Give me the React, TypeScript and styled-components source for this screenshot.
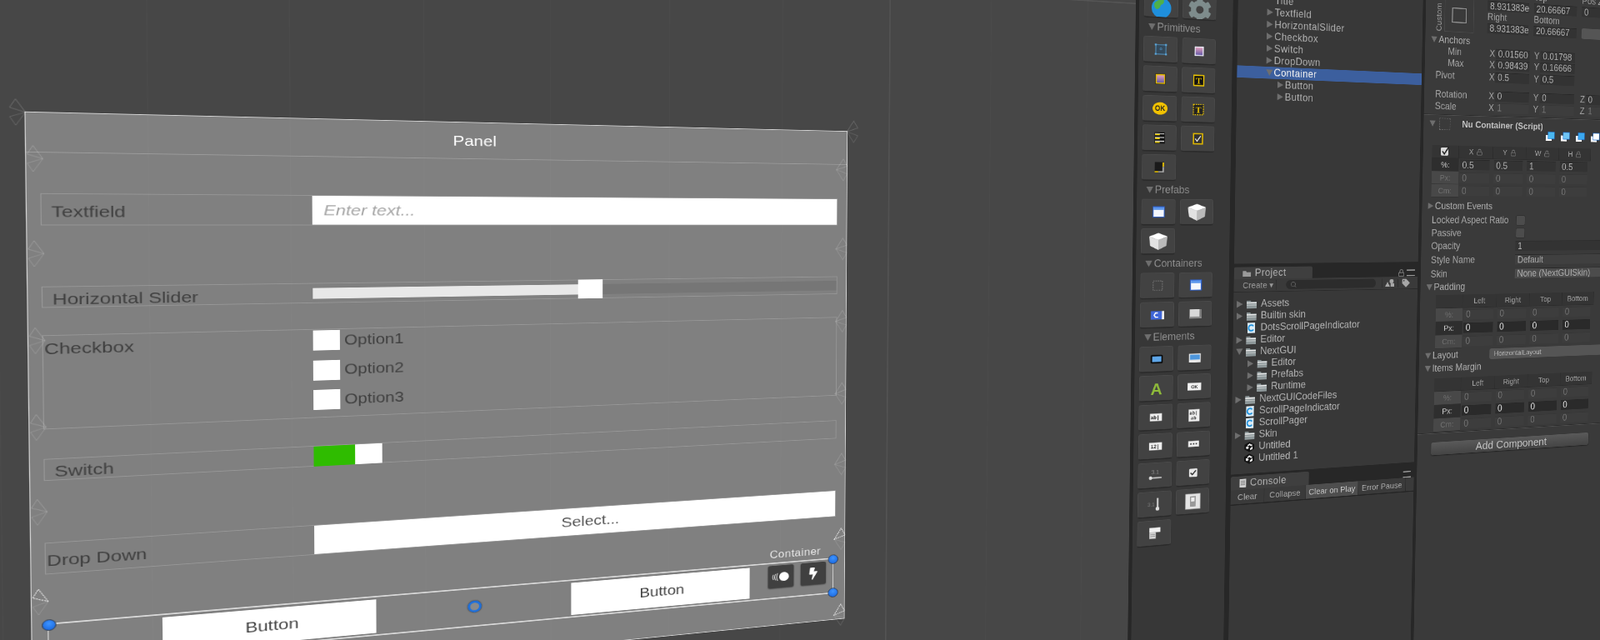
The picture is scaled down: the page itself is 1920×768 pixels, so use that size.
import React from 'react'
import styled, { createGlobalStyle, css } from 'styled-components'
import { FaCog, FaTag, FaBolt } from 'react-icons/fa'
import { Lock, Search } from 'lucide-react'

// The whole editor is tilted in the picture. It is laid out flat and mapped on
// screen with one homography, measured from the corners of the 1000x770 panel.
const PANEL_QUAD = [
  [30.6, 134.7],
  [1016.3, 158],
  [1012.7, 741.7],
  [39.5, 838]
]
const PANEL_W = 1000
const PANEL_H = 770
const ORIGIN_X = -60
const ORIGIN_Y = -320

function pageMatrix() {
  const [[x0, y0], [x1, y1], [x2, y2], [x3, y3]] = PANEL_QUAD
  const sx = x0 - x1 + x2 - x3
  const sy = y0 - y1 + y2 - y3
  const dx1 = x1 - x2
  const dx2 = x3 - x2
  const dy1 = y1 - y2
  const dy2 = y3 - y2
  const den = dx1 * dy2 - dx2 * dy1
  const g = (sx * dy2 - dx2 * sy) / den
  const h = (dx1 * sy - sx * dy1) / den
  const a = (x1 - x0 + g * x1) / PANEL_W
  const b = (x3 - x0 + h * x3) / PANEL_H
  const d = (y1 - y0 + g * y1) / PANEL_W
  const e = (y3 - y0 + h * y3) / PANEL_H
  const gg = g / PANEL_W
  const hh = h / PANEL_H
  const c = x0 + a * ORIGIN_X + b * ORIGIN_Y
  const f = y0 + d * ORIGIN_X + e * ORIGIN_Y
  const i = 1 + gg * ORIGIN_X + hh * ORIGIN_Y
  return `matrix3d(${[a, d, 0, gg, b, e, 0, hh, 0, 0, 1, 0, c, f, 0, i].join(',')})`
}

const GlobalStyle = createGlobalStyle`
  html, body {
    margin: 0;
    height: 100%;
    overflow: hidden;
    background: #474747;
  }
`

const Stage = styled.div`
  display: flex;
  width: 2600px;
  height: 1320px;
  background: #272727;
  font-family: 'Liberation Sans', Arial, sans-serif;
  font-size: 17.5px;
  color: #b0b0b0;
  filter: blur(0.45px);
  transform-origin: 0 0;
  transform: ${pageMatrix()};
`

/* ---------- scene view ---------- */

const Scene = styled.div`
  flex: none;
  width: 1515px;
  padding: 320px 0 0 60px;
  box-sizing: border-box;
  background-color: #474747;
  background-image:
    linear-gradient(rgba(255, 255, 255, 0.08), rgba(255, 255, 255, 0.08)),
    linear-gradient(rgba(255, 255, 255, 0.05), rgba(255, 255, 255, 0.05)),
    linear-gradient(90deg, rgba(255, 255, 255, 0.02) 1px, transparent 1px);
  background-size: 100% 2px, 2px 100%, 156px 100%;
  background-position: 0 92px, 1122px 0, 30px 0;
  background-repeat: no-repeat, no-repeat, repeat;
`

const Panel = styled.div`
  position: relative;
  width: ${PANEL_W}px;
  height: ${PANEL_H}px;
  box-sizing: border-box;
  background: rgba(255, 255, 255, 0.31);
  outline: 1.5px solid #d4d4d4;
  color: #3f3f3f;
  font-size: 21px;
`

const PanelTitle = styled.div`
  height: 52px;
  padding-top: 3px;
  box-sizing: border-box;
  text-align: center;
  line-height: 46px;
  color: #fff;
  border-bottom: 1px solid rgba(255, 255, 255, 0.22);
`

const FormRow = styled.div<{ $mt: number; $h: number; $top?: boolean }>`
  display: flex;
  align-items: ${p => (p.$top ? 'flex-start' : 'stretch')};
  box-sizing: border-box;
  height: ${p => p.$h}px;
  margin: ${p => p.$mt}px 13.5px 0 14px;
  border: 1px solid rgba(255, 255, 255, 0.18);
`

const RowLabel = styled.div<{ $flush?: boolean; $top?: boolean }>`
  flex: none;
  width: 292px;
  box-sizing: border-box;
  padding: ${p => (p.$top ? 0 : 4)}px 0 0 ${p => (p.$flush ? 1 : 10)}px;
  line-height: ${p => (p.$top ? '33px' : '1')};
  display: flex;
  align-items: ${p => (p.$top ? 'flex-start' : 'center')};
`

const TextInput = styled.div`
  flex: 1;
  display: flex;
  align-items: center;
  padding-left: 13px;
  background: #fff;
  color: #a6a6a6;
  font-style: italic;
`

const SliderTrack = styled.div`
  flex: 1;
  position: relative;
  display: flex;
  align-items: center;
`

const SliderRail = styled.div`
  flex: 1;
  height: 15px;
  background: #767676;
`

const SliderFill = styled.div`
  height: 100%;
  background: #e8e8e8;
`

const SliderThumb = styled.div`
  position: absolute;
  top: -1px;
  width: 32px;
  height: 28px;
  background: #fff;
`

const OptionList = styled.div`
  display: flex;
  flex-direction: column;
  gap: 13.5px;
  padding-top: 1px;
`

const Option = styled.div`
  display: flex;
  align-items: center;
  gap: 5px;
  height: 28px;
  font-size: 20px;
`

const OptionBox = styled.div`
  width: 31px;
  height: 28px;
  background: #fff;
`

const Switch = styled.div`
  display: flex;
  height: 28px;
`

const SwitchPart = styled.div<{ $on?: boolean }>`
  width: ${p => (p.$on ? 48 : 32)}px;
  background: ${p => (p.$on ? '#2fbc00' : '#fff')};
`

const SelectBox = styled.div`
  flex: 1;
  display: flex;
  align-items: center;
  justify-content: center;
  background: #fff;
  color: #555;
`

const ContainerBar = styled.div`
  position: relative;
  display: flex;
  justify-content: space-around;
  align-items: center;
  box-sizing: border-box;
  height: 57px;
  margin: 65px 15.6px 0;
  border: solid #d8d8d8;
  border-width: 2px 1px;
`

const WhiteButton = styled.div`
  display: flex;
  align-items: center;
  justify-content: center;
  width: 25%;
  height: 48px;
  background: #fff;
  color: #444;
`

const ContainerTag = styled.div`
  position: absolute;
  right: 18px;
  bottom: 100%;
  margin-bottom: 5px;
  font-size: 16px;
  letter-spacing: 0.5px;
  color: #e4e4e4;
`

const GizmoButtons = styled.div`
  position: absolute;
  right: 10px;
  top: 3px;
  display: flex;
  gap: 10px;
`

const GizmoButton = styled.div`
  display: flex;
  align-items: center;
  justify-content: center;
  width: 37px;
  height: 35px;
  border-radius: 3px;
  background: #404040;
  color: #fff;
  box-shadow: 0 1px 2px rgba(0, 0, 0, 0.5);
`

const Handle = styled.div<{ $x: string; $y: string }>`
  position: absolute;
  left: ${p => p.$x};
  top: ${p => p.$y};
  width: 13px;
  height: 13px;
  margin: -7px 0 0 -7px;
  border-radius: 50%;
  background: radial-gradient(circle at 50% 35%, #3d94ff, #1560d8);
  border: 1px solid #2c3a4f;
`

const PivotRing = styled.div`
  position: absolute;
  left: 50%;
  top: 50%;
  width: 11px;
  height: 11px;
  margin: -10px 0 0 -10px;
  border-radius: 50%;
  border: 3.5px solid #1f70dc;
  background: #8a8a8a;
  box-shadow: 0 0 2px #222;
`

const GizmoLayer = styled.svg`
  position: absolute;
  left: 0;
  top: 0;
  overflow: visible;
  pointer-events: none;
`

const ANCHOR_ROWS = [60, 184, 298, 412, 524, 643, 764]

const AnchorFan = ({ x, y, flip, live }: { x: number; y: number; flip?: boolean; live?: boolean }) => (
  <g transform={`translate(${x} ${y}) scale(${flip ? -1 : 1} 1)`} fill="none" strokeWidth="1">
    <path
      d="M0 0 L-10 -17 L-16 -6 Z"
      stroke={live ? '#fff' : 'rgba(255,255,255,0.18)'}
      strokeDasharray={live ? '2 1' : undefined}
    />
    <path d="M0 0 L-16 6 L-10 17 Z" stroke="rgba(255,255,255,0.14)" />
  </g>
)

/* ---------- toolbox ---------- */

const Toolbox = styled.div`
  flex: none;
  width: 164px;
  margin-left: 6px;
  box-sizing: border-box;
  padding: 70px 0 0 8px;
  background: #373737;
`

const SectionHead = styled.div`
  display: flex;
  align-items: center;
  gap: 3px;
  height: 32px;
  padding-left: 8px;
  color: #8f8f8f;
`

const ToolGrid = styled.div`
  display: grid;
  grid-template-columns: 59px 59px;
  grid-auto-rows: 44px;
  gap: 6px 8px;
`

const ToolButton = styled.div`
  display: flex;
  align-items: center;
  justify-content: center;
  overflow: hidden;
  border-radius: 4px;
  background: #424242;
  border: 1px solid #4a4a4a;
  border-bottom-color: #2b2b2b;
  box-sizing: border-box;
  box-shadow: 0 1px 1px #2a2a2a;
`

const Fold = styled.span<{ $open?: boolean }>`
  flex: none;
  width: 0;
  height: 0;
  ${p =>
    p.$open
      ? css`
          border-left: 6px solid transparent;
          border-right: 6px solid transparent;
          border-top: 11px solid #6e6e6e;
        `
      : css`
          border-top: 6px solid transparent;
          border-bottom: 6px solid transparent;
          border-left: 11px solid #6e6e6e;
        `}
`

const Pic = ({ children, large }: { children: React.ReactNode; large?: boolean }) => (
  <svg width={large ? 40 : 32} height={large ? 32 : 26} viewBox="0 0 40 32">
    {children}
  </svg>
)

const Cube = () => (
  <Pic large>
    <polygon points="20,2 36,8 20,14 4,8" fill="#fff" />
    <polygon points="4,8 20,14 20,31 6,24" fill="#e2e2e2" />
    <polygon points="36,8 20,14 20,31 34,24" fill="#b9b9b9" />
  </Pic>
)

const Win = () => (
  <Pic>
    <rect x="8" y="5" width="24" height="22" fill="#f4f6fb" stroke="#2f62d0" strokeWidth="2" />
    <rect x="9" y="6" width="22" height="6" fill="#5d97ec" />
  </Pic>
)

const Sky = ({ id, stroke, fillBack }: { id: string; stroke: string; fillBack?: string }) => (
  <Pic>
    <defs>
      <linearGradient id={id} x1="0" y1="0" x2="0" y2="1">
        <stop offset="0" stopColor="#e8a3bd" />
        <stop offset="1" stopColor="#5d55a6" />
      </linearGradient>
    </defs>
    <rect x="9" y="5" width="22" height="22" fill={fillBack ?? 'none'} />
    <rect x="11" y="7" width="18" height="18" fill={`url(#${id})`} stroke={stroke} strokeWidth="2.5" />
  </Pic>
)

const TOOLS: Record<string, React.ReactNode> = {
  globe: (
    <svg width="40" height="40" viewBox="0 0 40 40" style={{ marginTop: 12 }}>
      <circle cx="20" cy="20" r="17" fill="#1f8fdc" />
      <path d="M8 12 q8 -8 16 -6 q2 6 -5 9 q-2 8 -8 7 q-5 -4 -3 -10z" fill="#4fb04a" />
    </svg>
  ),
  gear: <FaCog size={42} color="#7e8c8c" style={{ marginTop: 10 }} />,
  rect: (
    <Pic>
      <rect x="9" y="6" width="22" height="20" fill="#34495a" stroke="#5aa8de" strokeWidth="1.5" />
      <rect x="7" y="4" width="4" height="4" fill="#5aa8de" />
      <rect x="29" y="4" width="4" height="4" fill="#5aa8de" />
      <rect x="7" y="24" width="4" height="4" fill="#5aa8de" />
      <rect x="29" y="24" width="4" height="4" fill="#5aa8de" />
      <circle cx="20" cy="15" r="2" fill="none" stroke="#5aa8de" />
    </Pic>
  ),
  imageWhite: <Sky id="skyA" stroke="#e8e8f4" fillBack="#222" />,
  imageYellow: <Sky id="skyB" stroke="#e0b800" fillBack="#111" />,
  textBox: (
    <Pic>
      <rect x="9" y="5" width="22" height="22" fill="#111" stroke="#f0c800" strokeWidth="2.5" />
      <text x="20" y="23" textAnchor="middle" fontFamily="'Liberation Serif', serif" fontWeight="700" fontSize="19" fill="#f0c800">T</text>
    </Pic>
  ),
  ok: (
    <Pic large>
      <ellipse cx="20" cy="16" rx="13" ry="10.5" fill="#f2c200" />
      <text x="20" y="20.5" textAnchor="middle" fontFamily="'Liberation Sans', sans-serif" fontWeight="700" fontSize="12" fill="#222">OK</text>
    </Pic>
  ),
  textDashed: (
    <Pic>
      <rect x="9" y="5" width="22" height="22" fill="#222" stroke="#f0c800" strokeWidth="2" strokeDasharray="3 2" />
      <text x="20" y="23" textAnchor="middle" fontFamily="'Liberation Serif', serif" fontWeight="700" fontSize="19" fill="#f0c800">T</text>
    </Pic>
  ),
  list: (
    <Pic>
      <rect x="9" y="4" width="22" height="24" fill="#111" />
      {[6, 14, 22].map(y => (
        <React.Fragment key={y}>
          <rect x="10" y={y} width="20" height="2" fill="#ddd" />
          <rect x="10" y={y + 2} width="10" height="2.5" fill="#f0d000" />
        </React.Fragment>
      ))}
    </Pic>
  ),
  check: (
    <Pic>
      <rect x="10" y="5" width="20" height="22" fill="#333" stroke="#e0b800" strokeWidth="2.5" />
      <path d="M14 16 l4 5 l8 -11" fill="none" stroke="#fff" strokeWidth="2" />
    </Pic>
  ),
  slider: (
    <Pic>
      <rect x="10" y="5" width="20" height="22" fill="#1a1a1a" />
      <rect x="27" y="6" width="3" height="9" fill="#f0c800" />
      <rect x="27" y="15" width="3" height="12" fill="#aaa" />
      <rect x="10" y="24" width="8" height="3" fill="#f0c800" />
      <rect x="18" y="24" width="10" height="3" fill="#aaa" />
    </Pic>
  ),
  window: <Win />,
  cube: <Cube />,
  dashed: (
    <Pic>
      <rect x="10" y="6" width="20" height="20" fill="none" stroke="#6e6e6e" strokeWidth="2" strokeDasharray="3 2" />
    </Pic>
  ),
  scroll: (
    <Pic>
      <rect x="6" y="8" width="24" height="18" fill="#3f66d8" />
      <rect x="30" y="8" width="5" height="18" fill="#eee" />
      <path d="M21 12 h-5 l-3 5 l3 4 h6" fill="none" stroke="#fff" strokeWidth="2.5" />
    </Pic>
  ),
  panelGray: (
    <Pic>
      <rect x="7" y="6" width="26" height="20" fill="#d8d8d8" />
      <rect x="29" y="6" width="4" height="20" fill="#7a7a7a" />
      <rect x="7" y="22" width="26" height="4" fill="#8a8a8a" />
    </Pic>
  ),
  buttonDark: (
    <Pic>
      <rect x="7" y="7" width="26" height="18" rx="2" fill="#0a0a0a" />
      <rect x="10" y="10" width="20" height="12" fill="#5ea6e8" />
    </Pic>
  ),
  buttonBlue: (
    <Pic>
      <rect x="7" y="7" width="26" height="19" fill="#e8e8e8" />
      <rect x="9" y="9" width="22" height="11" fill="#4d96dc" />
    </Pic>
  ),
  label: (
    <Pic large>
      <text x="20" y="27" textAnchor="middle" fontFamily="'Liberation Sans', sans-serif" fontWeight="700" fontSize="28" fill="#8fbb3a">A</text>
    </Pic>
  ),
  okWhite: (
    <Pic>
      <rect x="5" y="8" width="30" height="16" fill="#f2f2f2" />
      <text x="20" y="20" textAnchor="middle" fontFamily="'Liberation Sans', sans-serif" fontWeight="700" fontSize="10" fill="#333">OK</text>
    </Pic>
  ),
  abField: (
    <Pic>
      <rect x="7" y="8" width="26" height="16" fill="#eee" />
      <text x="18" y="20" textAnchor="middle" fontFamily="'Liberation Mono', monospace" fontWeight="700" fontSize="11" fill="#222">ab|</text>
    </Pic>
  ),
  abArea: (
    <Pic>
      <rect x="8" y="3" width="24" height="26" fill="#eee" />
      <text x="19" y="14" textAnchor="middle" fontFamily="'Liberation Mono', monospace" fontWeight="700" fontSize="10" fill="#222">ab|</text>
      <text x="19" y="25" textAnchor="middle" fontFamily="'Liberation Mono', monospace" fontWeight="700" fontSize="10" fill="#222">ab</text>
    </Pic>
  ),
  numField: (
    <Pic>
      <rect x="6" y="8" width="28" height="16" fill="#eee" />
      <text x="19" y="20" textAnchor="middle" fontFamily="'Liberation Mono', monospace" fontWeight="700" fontSize="11" fill="#222">12|</text>
    </Pic>
  ),
  dots: (
    <Pic>
      <rect x="8" y="9" width="24" height="13" fill="#eee" />
      {[14, 20, 26].map(x => (
        <rect key={x} x={x - 1.5} y="14" width="3" height="3" fill="#333" />
      ))}
    </Pic>
  ),
  hSlider: (
    <Pic>
      <text x="20" y="13" textAnchor="middle" fontFamily="'Liberation Sans', sans-serif" fontSize="12" fill="#888">3.1</text>
      <rect x="8" y="20" width="26" height="3" fill="#c8c8c8" />
      <circle cx="10" cy="21.5" r="3.5" fill="#ddd" />
    </Pic>
  ),
  checkWhite: (
    <Pic>
      <rect x="11" y="7" width="18" height="18" rx="2" fill="#e8e8e8" />
      <path d="M14 16 l4 4 l8 -9" fill="none" stroke="#333" strokeWidth="2.5" />
    </Pic>
  ),
  vSlider: (
    <Pic>
      <text x="12" y="20" textAnchor="middle" fontFamily="'Liberation Sans', sans-serif" fontSize="11" fill="#888">3.1</text>
      <rect x="24" y="3" width="4" height="22" fill="#c8c8c8" />
      <circle cx="26" cy="26" r="4" fill="#ddd" />
    </Pic>
  ),
  toggle: (
    <Pic large>
      <rect x="7" y="3" width="26" height="26" fill="#e4e4e4" stroke="#bbb" />
      <rect x="15" y="7" width="10" height="18" fill="#999" />
      <rect x="17" y="9" width="6" height="7" fill="#eee" />
    </Pic>
  ),
  dropdown: (
    <Pic>
      <rect x="9" y="4" width="24" height="10" fill="#f0f0f0" />
      <rect x="9" y="14" width="14" height="14" fill="#d4d4d4" />
      <rect x="11" y="18" width="10" height="1.5" fill="#888" />
      <rect x="11" y="22" width="10" height="1.5" fill="#888" />
    </Pic>
  )
}

const TOOL_SECTIONS = [
  { title: '', tools: ['globe', 'gear'] },
  { title: 'Primitives', tools: ['rect', 'imageWhite', 'imageYellow', 'textBox', 'ok', 'textDashed', 'list', 'check', 'slider'] },
  { title: 'Prefabs', tools: ['window', 'cube', 'cube'] },
  { title: 'Containers', tools: ['dashed', 'window', 'scroll', 'panelGray'] },
  {
    title: 'Elements',
    tools: ['buttonDark', 'buttonBlue', 'label', 'okWhite', 'abField', 'abArea', 'numField', 'dots', 'hSlider', 'checkWhite', 'vSlider', 'toggle', 'dropdown']
  }
]

/* ---------- hierarchy, project, console ---------- */

const MiddleColumn = styled.div`
  flex: none;
  width: 351px;
  margin-left: 9px;
  display: flex;
  flex-direction: column;
`

const Hierarchy = styled.div`
  height: 534px;
  box-sizing: border-box;
  padding-top: 62.5px;
  background: #383838;
`

const TreeRow = styled.div<{ $depth: number; $selected?: boolean }>`
  display: flex;
  align-items: center;
  height: 21px;
  box-sizing: border-box;
  padding-left: ${p => 53 + p.$depth * 21}px;
  background: ${p => (p.$selected ? '#3c5f9e' : 'transparent')};
  color: ${p => (p.$selected ? '#f2f2f2' : '#b0b0b0')};
  letter-spacing: 0.5px;
`

const FoldSlot = styled.span`
  flex: none;
  width: 14px;
  display: flex;
  align-items: center;
`

const TabStrip = styled.div<{ $h: number; $mt: number }>`
  display: flex;
  align-items: flex-end;
  justify-content: space-between;
  height: ${p => p.$h}px;
  margin-top: ${p => p.$mt}px;
  padding-right: 6px;
`

const Tab = styled.div`
  display: flex;
  align-items: center;
  gap: 7px;
  box-sizing: border-box;
  width: 145px;
  height: 100%;
  padding-left: 16px;
  border-radius: 3px 3px 0 0;
  background: #3f3f3f;
  letter-spacing: 0.5px;
`

const StripTools = styled.div`
  display: flex;
  align-items: center;
  gap: 4px;
  color: #9a9a9a;
`

const MenuLines = styled.span`
  width: 16px;
  height: 8px;
  border-top: 2px solid #9a9a9a;
  border-bottom: 2px solid #9a9a9a;
`

const ProjectBar = styled.div`
  display: flex;
  align-items: center;
  height: 22px;
  background: #3a3a3a;
  border-bottom: 1px solid #2a2a2a;
  font-size: 15px;
`

const CreateMenu = styled.div`
  width: 78px;
  padding-left: 16px;
  box-sizing: border-box;
  color: #999;
  white-space: nowrap;
  border-right: 1px solid #2c2c2c;
`

const SearchPill = styled.div`
  display: flex;
  align-items: center;
  width: 172px;
  height: 16px;
  margin: 0 12px 0 18px;
  padding-left: 8px;
  box-sizing: border-box;
  border-radius: 8px;
  background: #2c2c2c;
  color: #6a6a6a;
`

const BarIcon = styled.div`
  display: flex;
  justify-content: center;
  width: 30px;
  color: #a6a6a6;
  border-left: 1px solid #2c2c2c;
`

const ProjectList = styled.div`
  height: 320px;
  box-sizing: border-box;
  padding-top: 10px;
  background: #383838;
`

const ProjectRow = styled.div<{ $depth: number }>`
  display: flex;
  align-items: center;
  height: 21px;
  padding-left: ${p => 6 + p.$depth * 21}px;
  color: #b4b4b4;
`

const ProjectFold = styled.span`
  flex: none;
  width: 16px;
  display: flex;
`

const ProjectIcon = styled.svg`
  flex: none;
  width: 22px;
  height: 18px;
  margin-right: 6px;
`

const ConsoleBar = styled.div`
  display: flex;
  align-items: stretch;
  height: 27px;
  background: #3a3a3a;
  border-bottom: 2px solid #252525;
  box-sizing: border-box;
  font-size: 15px;
`

const ConsoleButton = styled.div<{ $w: number; $on?: boolean }>`
  display: flex;
  align-items: center;
  justify-content: center;
  width: ${p => p.$w}px;
  border-right: 1px solid #2c2c2c;
  background: ${p => (p.$on ? '#4e4e4e' : 'transparent')};
  color: ${p => (p.$on ? '#c4c4c4' : '#a8a8a8')};
  white-space: nowrap;
`

const ConsoleBody = styled.div`
  flex: 1;
  background: #383838;
`

const Folder = () => (
  <ProjectIcon viewBox="0 0 22 18">
    <path d="M2 3 h7 l1 2 h10 v12 h-18 z" fill="#8d9799" />
    <rect x="2" y="6" width="18" height="2" fill="#e8e8e8" />
    <rect x="2" y="10" width="18" height="1.5" fill="#c8cdce" />
  </ProjectIcon>
)

const ScriptFile = () => (
  <ProjectIcon viewBox="0 0 22 18">
    <rect x="4" y="0" width="14" height="18" fill="#dcecf6" />
    <path d="M15 6 a5 5 0 1 0 0 6" fill="none" stroke="#1b8fdc" strokeWidth="2.6" />
  </ProjectIcon>
)

const SceneFile = () => (
  <ProjectIcon viewBox="0 0 22 18">
    <polygon points="11,0 20,5 20,13 11,18 2,13 2,5" fill="#111" />
    <path d="M11 3 l6 3 l-3 2 l-3 -2 l-3 2 l-1 -2z M5 8 h3 l2 2 l-2 3 l-3 -1z M17 8 v5 l-5 2 v-3z" fill="#eee" />
  </ProjectIcon>
)

const HIERARCHY = [
  { name: 'Title', depth: 0, fold: '' },
  { name: 'Textfield', depth: 0, fold: 'closed' },
  { name: 'HorizontalSlider', depth: 0, fold: 'closed' },
  { name: 'Checkbox', depth: 0, fold: 'closed' },
  { name: 'Switch', depth: 0, fold: 'closed' },
  { name: 'DropDown', depth: 0, fold: 'closed' },
  { name: 'Container', depth: 0, fold: 'open', selected: true },
  { name: 'Button', depth: 1, fold: 'closed' },
  { name: 'Button', depth: 1, fold: 'closed' }
]

const PROJECT = [
  { name: 'Assets', depth: 0, kind: 'folder', fold: 'closed' },
  { name: 'Builtin skin', depth: 0, kind: 'folder', fold: 'closed' },
  { name: 'DotsScrollPageIndicator', depth: 0, kind: 'script', fold: '' },
  { name: 'Editor', depth: 0, kind: 'folder', fold: 'closed' },
  { name: 'NextGUI', depth: 0, kind: 'folder', fold: 'open' },
  { name: 'Editor', depth: 1, kind: 'folder', fold: 'closed' },
  { name: 'Prefabs', depth: 1, kind: 'folder', fold: 'closed' },
  { name: 'Runtime', depth: 1, kind: 'folder', fold: 'closed' },
  { name: 'NextGUICodeFiles', depth: 0, kind: 'folder', fold: 'closed' },
  { name: 'ScrollPageIndicator', depth: 0, kind: 'script', fold: '' },
  { name: 'ScrollPager', depth: 0, kind: 'script', fold: '' },
  { name: 'Skin', depth: 0, kind: 'folder', fold: 'closed' },
  { name: 'Untitled', depth: 0, kind: 'scene', fold: '' },
  { name: 'Untitled 1', depth: 0, kind: 'scene', fold: '' }
]

/* ---------- inspector ---------- */

const Inspector = styled.div`
  flex: 1;
  margin-left: 6px;
  padding-top: 26.5px;
  box-sizing: border-box;
  background: #3a3a3a;
`

const RectGroup = styled.div`
  display: flex;
  height: 83px;
`

const CustomTag = styled.div`
  flex: none;
  width: 18px;
  margin-left: 18px;
  writing-mode: vertical-rl;
  transform: rotate(180deg);
  text-align: left;
  font-size: 15px;
  line-height: 18px;
  color: #999;
`

const PresetBox = styled.div`
  display: flex;
  align-items: center;
  justify-content: center;
  flex: none;
  width: 60px;
  height: 62px;
  margin: 21px 0 0 2px;
  border: 1px solid #4a4a4a;
  box-sizing: border-box;
`

const PresetCore = styled.div`
  width: 30px;
  height: 28px;
  border: 2px solid #8c8c8c;
  box-sizing: border-box;
`

const RectGrid = styled.div`
  display: grid;
  grid-template-columns: 87px 93px 70px;
  grid-auto-rows: 20.75px;
  column-gap: 11px;
  margin-left: 28px;
  align-items: center;
`

const Field = styled.div<{ $dim?: boolean; $strong?: boolean; $tone?: string }>`
  display: flex;
  align-items: center;
  box-sizing: border-box;
  height: 19px;
  padding-left: 5px;
  overflow: hidden;
  white-space: nowrap;
  background: ${p => p.$tone ?? (p.$dim ? '#3d3d3d' : p.$strong ? '#2a2a2a' : '#333')};
  border-top: 1px solid ${p => (p.$dim ? '#363636' : '#272727')};
  color: ${p => (p.$dim ? '#757575' : p.$strong ? '#e0e0e0' : '#b0b0b0')};
`

const AxisRow = styled.div<{ $mt?: number }>`
  display: grid;
  grid-template-columns: 132px 13px 72px 23px 75px 26px 1fr;
  align-items: center;
  height: 21px;
  margin-top: ${p => p.$mt ?? 0}px;
`

const AxisTitle = styled.div<{ $sub?: boolean; $flat?: boolean }>`
  padding-left: ${p => (p.$flat ? 0 : p.$sub ? 46 : 22)}px;
  color: #a4a4a4;
`

const AxisLetter = styled.div`
  text-align: right;
  padding-right: 2px;
  color: #a4a4a4;
`

const FoldRow = styled.div<{ $mt?: number; $h?: number }>`
  display: flex;
  align-items: center;
  gap: 3px;
  height: ${p => p.$h ?? 21}px;
  margin-top: ${p => p.$mt ?? 0}px;
  padding-left: 12px;
  color: #b0b0b0;
`

const Separator = styled.div<{ $mt: number }>`
  height: 1px;
  margin-top: ${p => p.$mt}px;
  background: #505050;
  box-shadow: 0 -1px 0 #2a2a2a;
`

const ScriptHead = styled.div`
  display: flex;
  align-items: center;
  height: 24px;
  margin-top: 4px;
  padding-left: 12px;
  color: #c4c4c4;
  font-size: 17px;
  font-weight: 700;
`

const ScriptBox = styled.div`
  flex: none;
  width: 20px;
  height: 20px;
  margin: 0 24px 0 8px;
  border: 1px dashed #707070;
`

const ScriptIcons = styled.div`
  display: flex;
  gap: 9px;
  height: 22px;
  margin-top: -5px;
  padding-left: 252px;
`

const LayoutIcon = styled.svg`
  flex: none;
  width: 24px;
  height: 22px;
`

const UnitGrid = styled.div<{ $mt: number; $left: number; $first: number; $row: number }>`
  display: grid;
  grid-template-columns: ${p => p.$first}px repeat(4, 70.5px);
  grid-auto-rows: ${p => p.$row}px;
  margin: ${p => p.$mt}px 0 0 ${p => p.$left}px;
  align-items: center;
`

const HeadCell = styled.div`
  display: flex;
  align-items: center;
  justify-content: center;
  gap: 6px;
  height: 100%;
  background: #343434;
  border-right: 1px solid #2c2c2c;
  border-bottom: 1px solid #2c2c2c;
  box-sizing: border-box;
  font-size: 14.5px;
  color: #a0a0a0;
`

const UnitCell = styled.div<{ $on: boolean }>`
  display: flex;
  align-items: center;
  justify-content: center;
  height: 100%;
  box-sizing: border-box;
  border-bottom: 1px solid #333;
  background: ${p => (p.$on ? '#2e2e2e' : '#484848')};
  color: ${p => (p.$on ? '#c8c8c8' : '#707070')};
  font-size: 15px;
`

const ValueCell = styled.div`
  padding: 0 7px 0 2px;
`

const FormLine = styled.div<{ $mt?: number }>`
  display: grid;
  grid-template-columns: 195px 1fr;
  align-items: center;
  height: 22px;
  margin-top: ${p => p.$mt ?? 0}px;
  color: #a8a8a8;
`

const FormName = styled.div`
  padding-left: 20px;
`

const TickBox = styled.div`
  width: 18px;
  height: 17px;
  border-radius: 3px;
  background: #4c4c4c;
  border: 1px solid #2c2c2c;
`

const LayoutSelect = styled.div<{ $gap?: number }>`
  display: flex;
  align-items: center;
  height: 20px;
  flex: 1;
  margin-left: ${p => p.$gap ?? 0}px;
  padding-left: 10px;
  border-radius: 4px;
  background: #555;
  color: #bbb;
  font-size: 13.5px;
`

const AddComponent = styled.div`
  display: flex;
  align-items: center;
  justify-content: center;
  width: 336px;
  height: 24px;
  margin: 16px 0 0 28px;
  border-radius: 4px;
  background: linear-gradient(#5a5a5a, #444);
  color: #c4c4c4;
  font-size: 21px;
  box-shadow: 0 1px 2px rgba(0, 0, 0, 0.5);
`

const Mini = styled(Lock)`
  flex: none;
  color: #777;
`

const ZERO_GRID = [
  ['0', '0', '0', '0'],
  ['0', '0', '0', '0'],
  ['0', '0', '0', '0']
]

const UNIT_ROWS = ['%:', 'Px:', 'Cm:']

const UnitTable = ({
  mt,
  left,
  first,
  row,
  active,
  heads,
  values,
  corner,
  locks
}: {
  mt: number
  left: number
  first: number
  row: number
  active: number
  heads: string[]
  values: string[][]
  corner?: React.ReactNode
  locks?: boolean
}) => (
  <UnitGrid $mt={mt} $left={left} $first={first} $row={row}>
    <HeadCell>{corner}</HeadCell>
    {heads.map(h => (
      <HeadCell key={h}>
        {h}
        {locks && <Mini size={13} />}
      </HeadCell>
    ))}
    {UNIT_ROWS.map((unit, i) => (
      <React.Fragment key={unit}>
        <UnitCell $on={i === active}>{unit}</UnitCell>
        {values[i].map((v, j) => (
          <ValueCell key={j}>
            <Field $dim={i !== active} $strong={i === active && values === ZERO_GRID}>
              {v}
            </Field>
          </ValueCell>
        ))}
      </React.Fragment>
    ))}
  </UnitGrid>
)

const SIDES = ['Left', 'Right', 'Top', 'Bottom']

const Axis = ({ title, sub, x, y, z, dim, mt }: { title: string; sub?: boolean; x: string; y: string; z?: string; dim?: boolean; mt?: number }) => (
  <AxisRow $mt={mt}>
    <AxisTitle $sub={sub}>{title}</AxisTitle>
    <AxisLetter>X</AxisLetter>
    <Field $dim={dim}>{x}</Field>
    <AxisLetter>Y</AxisLetter>
    <Field $dim={dim}>{y}</Field>
    {z !== undefined && <AxisLetter>Z</AxisLetter>}
    {z !== undefined && <Field $dim={dim}>{z}</Field>}
  </AxisRow>
)

const ArrangeIcon = ({ tone }: { tone: string }) => (
  <LayoutIcon viewBox="0 0 24 22">
    <rect x="3" y="8" width="13" height="11" fill="#fff" />
    <rect x="8" y="2" width="14" height="13" fill={tone} stroke="#1a6fd0" />
  </LayoutIcon>
)

export default function App() {
  return (
    <>
      <GlobalStyle />
      <Stage>
        <Scene>
          <Panel>
            <PanelTitle>Panel</PanelTitle>

            <FormRow $mt={53} $h={42}>
              <RowLabel>Textfield</RowLabel>
              <TextInput>Enter text...</TextInput>
            </FormRow>

            <FormRow $mt={80} $h={28}>
              <RowLabel>Horizontal Slider</RowLabel>
              <SliderTrack>
                <SliderRail>
                  <SliderFill style={{ width: '50%' }} />
                </SliderRail>
                <SliderThumb style={{ left: 'calc(50% - 16px)' }} />
              </SliderTrack>
            </FormRow>

            <FormRow $mt={36} $h={124} $top>
              <RowLabel $flush $top>
                Checkbox
              </RowLabel>
              <OptionList>
                {['Option1', 'Option2', 'Option3'].map(o => (
                  <Option key={o}>
                    <OptionBox />
                    {o}
                  </Option>
                ))}
              </OptionList>
            </FormRow>

            <FormRow $mt={39} $h={29}>
              <RowLabel>Switch</RowLabel>
              <Switch>
                <SwitchPart $on />
                <SwitchPart />
              </Switch>
            </FormRow>

            <FormRow $mt={82} $h={42}>
              <RowLabel $flush>Drop Down</RowLabel>
              <SelectBox>Select...</SelectBox>
            </FormRow>

            <ContainerBar>
              <WhiteButton>Button</WhiteButton>
              <WhiteButton>Button</WhiteButton>
              <ContainerTag>Container</ContainerTag>
              <GizmoButtons>
                <GizmoButton>
                  <svg width="26" height="18" viewBox="0 0 26 18">
                    <circle cx="17" cy="9" r="7" fill="#fff" />
                    <path d="M8 3 q-3 6 0 12 M5 4 q-3 5 0 10 M2 5 q-2 4 0 8" fill="none" stroke="#ddd" strokeWidth="1.2" />
                  </svg>
                </GizmoButton>
                <GizmoButton>
                  <FaBolt size={19} />
                </GizmoButton>
              </GizmoButtons>
              <Handle $x="0%" $y="0%" />
              <Handle $x="100%" $y="0%" />
              <Handle $x="100%" $y="100%" />
              <Handle $x="0%" $y="100%" />
              <PivotRing />
            </ContainerBar>

            <GizmoLayer width={PANEL_W} height={PANEL_H}>
              <AnchorFan x={0} y={0} />
              <AnchorFan x={1000} y={0} flip />
              {ANCHOR_ROWS.map((y, i) => (
                <React.Fragment key={y}>
                  <AnchorFan x={17} y={y} live={i === 5} />
                  <AnchorFan x={985} y={y} flip live={i >= 5} />
                </React.Fragment>
              ))}
            </GizmoLayer>
          </Panel>
        </Scene>

        <Toolbox>
          {TOOL_SECTIONS.map(section => (
            <React.Fragment key={section.title || 'top'}>
              {section.title && (
                <SectionHead>
                  <Fold $open />
                  {section.title}
                </SectionHead>
              )}
              <ToolGrid>
                {section.tools.map((tool, i) => (
                  <ToolButton key={i}>{TOOLS[tool]}</ToolButton>
                ))}
              </ToolGrid>
            </React.Fragment>
          ))}
        </Toolbox>

        <MiddleColumn>
          <Hierarchy>
            {HIERARCHY.map((item, i) => (
              <TreeRow key={i} $depth={item.depth} $selected={item.selected}>
                <FoldSlot>{item.fold && <Fold $open={item.fold === 'open'} />}</FoldSlot>
                {item.name}
              </TreeRow>
            ))}
          </Hierarchy>

          <TabStrip $h={21} $mt={6}>
            <Tab>
              <svg width="15" height="12" viewBox="0 0 15 12">
                <path d="M0 2 h6 l1 2 h8 v8 h-15 z" fill="#9a9a9a" />
              </svg>
              Project
            </Tab>
            <StripTools>
              <Lock size={14} />
              <MenuLines />
            </StripTools>
          </TabStrip>
          <ProjectBar>
            <CreateMenu>Create ▾</CreateMenu>
            <SearchPill>
              <Search size={12} />
            </SearchPill>
            <BarIcon>
              <svg width="20" height="16" viewBox="0 0 20 16">
                <circle cx="13" cy="5" r="4" fill="#a6a6a6" />
                <polygon points="5,6 10,15 0,15" fill="#a6a6a6" />
                <rect x="11" y="9" width="7" height="6" fill="#a6a6a6" />
              </svg>
            </BarIcon>
            <BarIcon>
              <FaTag size={15} />
            </BarIcon>
          </ProjectBar>
          <ProjectList>
            {PROJECT.map((item, i) => (
              <ProjectRow key={i} $depth={item.depth}>
                <ProjectFold>{item.fold && <Fold $open={item.fold === 'open'} />}</ProjectFold>
                {item.kind === 'folder' && <Folder />}
                {item.kind === 'script' && <ScriptFile />}
                {item.kind === 'scene' && <SceneFile />}
                {item.name}
              </ProjectRow>
            ))}
          </ProjectList>

          <TabStrip $h={24} $mt={4}>
            <Tab>
              <svg width="12" height="15" viewBox="0 0 12 15">
                <rect width="12" height="15" fill="#cfcfcf" />
                <path d="M2 4 h8 M2 7 h8 M2 10 h8" stroke="#444" />
              </svg>
              Console
            </Tab>
            <StripTools>
              <MenuLines />
            </StripTools>
          </TabStrip>
          <ConsoleBar>
            <ConsoleButton $w={61}>Clear</ConsoleButton>
            <ConsoleButton $w={77}>Collapse</ConsoleButton>
            <ConsoleButton $w={100} $on>
              Clear on Play
            </ConsoleButton>
            <ConsoleButton $w={93}>Error Pause</ConsoleButton>
          </ConsoleBar>
          <ConsoleBody />
        </MiddleColumn>

        <Inspector>
          <RectGroup>
            <CustomTag>Custom</CustomTag>
            <PresetBox>
              <PresetCore />
            </PresetBox>
            <RectGrid>
              <AxisTitle $flat>Left</AxisTitle>
              <AxisTitle $flat>Top</AxisTitle>
              <AxisTitle $flat>Pos Z</AxisTitle>
              <Field>8.931383e</Field>
              <Field>20.66667</Field>
              <Field>0</Field>
              <AxisTitle $flat>Right</AxisTitle>
              <AxisTitle $flat>Bottom</AxisTitle>
              <span />
              <Field>8.931383e</Field>
              <Field>20.66667</Field>
              <LayoutSelect />
            </RectGrid>
          </RectGroup>

          <FoldRow $mt={5}>
            <Fold $open />
            Anchors
          </FoldRow>
          <Axis title="Min" sub x="0.01560" y="0.01798" />
          <Axis title="Max" sub x="0.98439" y="0.16666" />
          <Axis title="Pivot" mt={2} x="0.5" y="0.5" />
          <Axis title="Rotation" mt={14} x="0" y="0" z="0" />
          <Axis title="Scale" mt={1} x="1" y="1" z="1" dim />
          <Separator $mt={5} />

          <ScriptHead>
            <Fold $open />
            <ScriptBox />
            Nu Container (Script)
          </ScriptHead>
          <ScriptIcons>
            <ArrangeIcon tone="#4ab8f0" />
            <ArrangeIcon tone="#6fc4f4" />
            <ArrangeIcon tone="#3aa8f0" />
            <ArrangeIcon tone="#fff" />
          </ScriptIcons>

          <UnitTable
            mt={10}
            left={18}
            first={55}
            row={24}
            active={0}
            locks
            corner={
              <svg width="22" height="20" viewBox="0 0 22 20">
                <rect x="2" y="3" width="15" height="15" rx="2" fill="#d8d8d8" />
                <path d="M5 10 l4 5 l9 -13" fill="none" stroke="#222" strokeWidth="2.4" />
              </svg>
            }
            heads={['X', 'Y', 'W', 'H']}
            values={[
              ['0.5', '0.5', '1', '0.5'],
              ['0', '0', '0', '0'],
              ['0', '0', '0', '0']
            ]}
          />

          <FoldRow $mt={6}>
            <Fold />
            Custom Events
          </FoldRow>
          <FormLine $mt={5}>
            <FormName>Locked Aspect Ratio</FormName>
            <TickBox />
          </FormLine>
          <FormLine $mt={2}>
            <FormName>Passive</FormName>
            <TickBox />
          </FormLine>
          <FormLine $mt={2}>
            <FormName>Opacity</FormName>
            <Field>1</Field>
          </FormLine>
          <FormLine $mt={4}>
            <FormName>Style Name</FormName>
            <Field $tone="#404040">Default</Field>
          </FormLine>
          <FormLine $mt={4}>
            <FormName>Skin</FormName>
            <Field $tone="#4c4c4c">None (NextGUISkin)</Field>
          </FormLine>

          <FoldRow $mt={2} $h={22}>
            <Fold $open />
            Padding
          </FoldRow>
          <UnitTable mt={3} left={32} first={55} row={25} active={1} heads={SIDES} values={ZERO_GRID} />

          <FoldRow $mt={2} $h={22}>
            <Fold $open />
            Layout
            <LayoutSelect $gap={62}>HorizontalLayout</LayoutSelect>
          </FoldRow>
          <FoldRow $mt={2} $h={22}>
            <Fold $open />
            Items Margin
          </FoldRow>
          <UnitTable mt={7} left={32} first={55} row={25} active={1} heads={SIDES} values={ZERO_GRID} />

          <Separator $mt={2} />
          <AddComponent>Add Component</AddComponent>
        </Inspector>
      </Stage>
    </>
  )
}
